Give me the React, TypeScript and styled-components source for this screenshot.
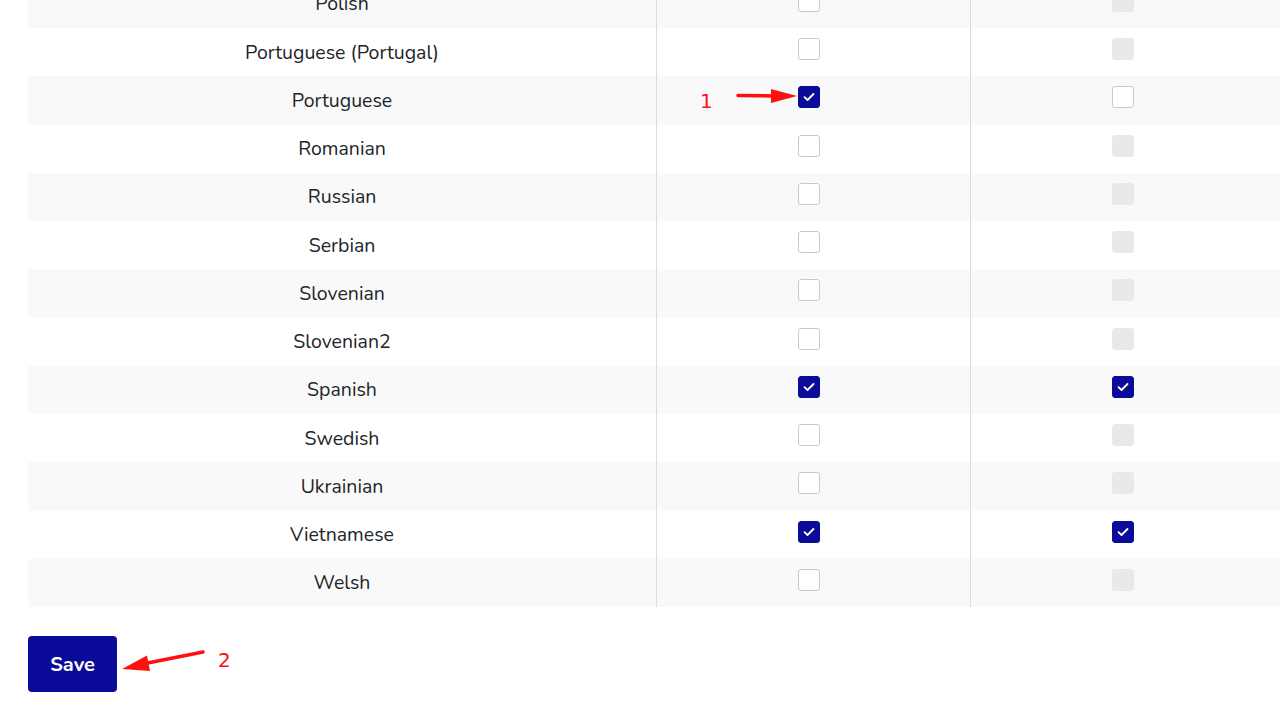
import React from "react";
import styled, { createGlobalStyle } from "styled-components";

const Global = createGlobalStyle`
  html, body { margin: 0; padding: 0; background: #fff; overflow: hidden; }
  body { font-family: "Nunito", "Open Sans", "Liberation Sans", sans-serif; color: #212529; }
`;

const Page = styled.div`
  position: relative;
  width: 1280px;
  height: 719px;
  overflow: hidden;
  padding: 0 0 0 28px;
  box-sizing: border-box;
`;

const Table = styled.div`
  margin-top: -20.25px;
  width: 1256px;
  display: grid;
  grid-template-columns: 628px 314px 314px;
`;

const Row = styled.div<{ $striped: boolean }>`
  display: contents;
  & > div { background: ${(p) => (p.$striped ? "#f9f9f9" : "#ffffff")}; }
`;

const NameCell = styled.div`
  height: 48.25px;
  display: flex;
  align-items: center;
  justify-content: center;
  font-size: 19.5px;
  box-sizing: border-box;
`;

const BoxCell = styled.div`
  height: 48.25px;
  display: flex;
  align-items: center;
  justify-content: center;
  padding-right: 10px;
  padding-bottom: 6px;
  box-sizing: border-box;
  border-left: 1px solid #dcdcdc;
`;

type Kind = "checked" | "empty" | "disabled";

const Box = styled.span<{ $kind: Kind }>`
  width: 22px;
  height: 22px;
  box-sizing: border-box;
  border-radius: 3px;
  display: inline-flex;
  align-items: center;
  justify-content: center;
  background: ${(p) =>
    p.$kind === "checked" ? "#0b0b99" : p.$kind === "disabled" ? "#e9e9e9" : "#ffffff"};
  border: ${(p) =>
    p.$kind === "checked"
      ? "1px solid #0b0b99"
      : p.$kind === "disabled"
      ? "1px solid #e9e9e9"
      : "1.5px solid #c9c9c9"};
`;

const Footer = styled.div`
  padding-top: 29px;
`;

const SaveButton = styled.button`
  width: 89px;
  height: 56px;
  border: none;
  border-radius: 4px;
  background: #0b0b99;
  color: #fff;
  font-family: "Nunito", "Open Sans", "Liberation Sans", sans-serif;
  font-weight: 700;
  font-size: 20px;
  padding: 0;
  cursor: pointer;
`;

const Overlay = styled.svg`
  position: absolute;
  left: 0;
  top: 0;
  pointer-events: none;
`;

const Label = styled.span<{ $x: number; $y: number }>`
  position: absolute;
  left: ${(p) => p.$x}px;
  top: ${(p) => p.$y}px;
  color: #ff1010;
  font-family: "DejaVu Sans", "Liberation Sans", sans-serif;
  font-size: 20px;
  line-height: 1;
`;

const rows: [string, Kind, Kind][] = [
  ["Polish", "empty", "disabled"],
  ["Portuguese (Portugal)", "empty", "disabled"],
  ["Portuguese", "checked", "empty"],
  ["Romanian", "empty", "disabled"],
  ["Russian", "empty", "disabled"],
  ["Serbian", "empty", "disabled"],
  ["Slovenian", "empty", "disabled"],
  ["Slovenian2", "empty", "disabled"],
  ["Spanish", "checked", "checked"],
  ["Swedish", "empty", "disabled"],
  ["Ukrainian", "empty", "disabled"],
  ["Vietnamese", "checked", "checked"],
  ["Welsh", "empty", "disabled"],
];

const Check = ({ kind }: { kind: Kind }) => (
  <Box $kind={kind}>
    {kind === "checked" && (
      <svg width="12" height="10" viewBox="0 0 12 10">
        <path d="M1.5 5.2 L4.5 8 L10.5 2" fill="none" stroke="#fff" strokeWidth="1.8" strokeLinecap="round" strokeLinejoin="round" />
      </svg>
    )}
  </Box>
);

export default function App() {
  return (
    <>
      <Global />
      <Page>
        <Table>
          {rows.map(([name, a, b], i) => (
            <Row key={name} $striped={i % 2 === 0}>
              <NameCell>{name}</NameCell>
              <BoxCell><Check kind={a} /></BoxCell>
              <BoxCell><Check kind={b} /></BoxCell>
            </Row>
          ))}
        </Table>
        <Footer>
          <SaveButton>Save</SaveButton>
        </Footer>
        <Overlay width="1280" height="719" viewBox="0 0 1280 719">
          <line x1="738" y1="95.5" x2="778" y2="96" stroke="#ff1010" strokeWidth="3.5" strokeLinecap="round" />
          <path d="M771 89 L797 96 L771 103 Z" fill="#ff1010" />
          <line x1="203" y1="652" x2="145" y2="663.5" stroke="#ff1010" strokeWidth="3.5" strokeLinecap="round" />
          <path d="M147 655.5 L122 669 L150 671 Z" fill="#ff1010" />
        </Overlay>
        <Label $x={700} $y={91}>1</Label>
        <Label $x={218} $y={650}>2</Label>
      </Page>
    </>
  );
}
